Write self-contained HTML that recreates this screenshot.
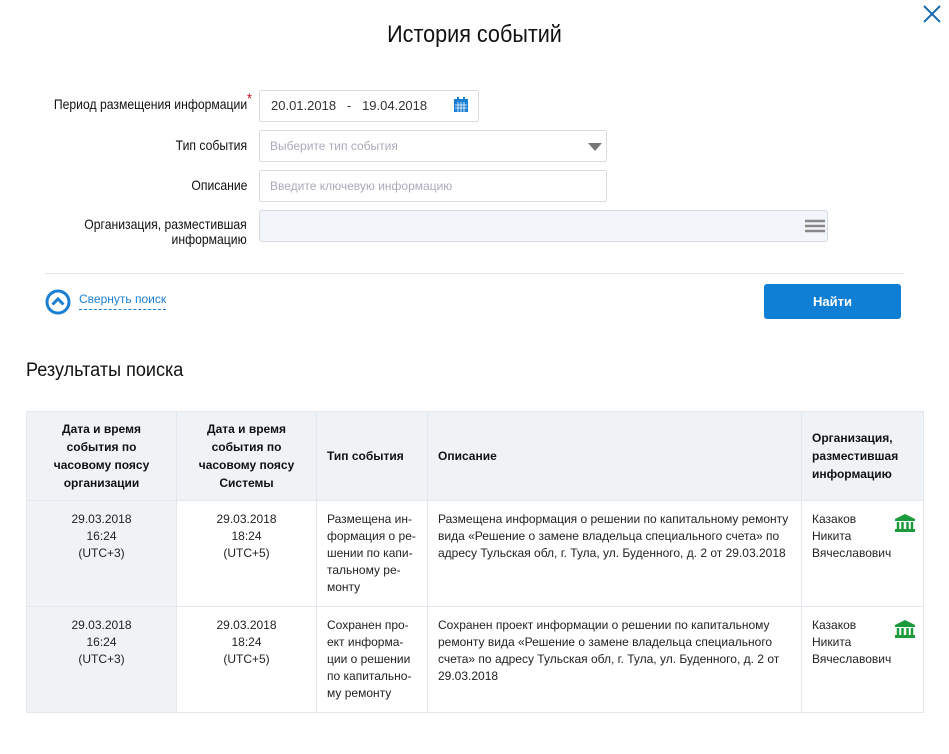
<!DOCTYPE html>
<html><head><meta charset="utf-8"><style>
*{margin:0;padding:0;box-sizing:border-box}
body{width:949px;height:754px;background:#fff;font-family:"Liberation Sans",sans-serif;color:#222;position:relative;overflow:hidden}
.a{position:absolute}
.lbl{position:absolute;right:702px;font-size:14px;text-align:right;color:#111;line-height:15px;transform:scaleX(.87);transform-origin:right center;white-space:nowrap}
.inp{position:absolute;left:259px;border:1px solid #d6dbe0;border-radius:3px;background:#fff;font-size:12px;color:#aab;padding-left:10px;line-height:30px;height:32px}
table{position:absolute;left:26px;top:411px;width:898px;border-collapse:collapse;font-size:12px;line-height:17px}
td,th{border:1px solid #e3e8ee;vertical-align:top;padding:10px 10px}
th{background:#f0f3f6;font-weight:bold;vertical-align:middle;text-align:left;color:#111;padding:8px 10px;line-height:18px}
th.c{text-align:center}
td.c{text-align:center}
td.g{background:#f0f3f6}
</style></head><body>
<div class="a" style="left:0;width:949px;top:21px;text-align:center;font-size:24px;color:#111;transform:scaleX(.9)">История событий</div>
<svg class="a" style="left:922px;top:4px" width="20" height="20"><path d="M2 2L18 18M18 2L2 18" stroke="#1a6bb0" stroke-width="2" fill="none"/></svg>

<div class="lbl" style="top:97px">Период размещения информации<span style="color:#d0021b;position:absolute;top:-6px">*</span></div>
<div class="inp" style="top:90px;width:220px;color:#333;font-size:13px;padding-left:11px">20.01.2018 &nbsp;&nbsp;- &nbsp;&nbsp;19.04.2018</div>
<svg class="a" style="left:453px;top:97px" width="16" height="16"><rect x="1" y="2" width="14" height="13" fill="#1a7fd4"/><rect x="4" y="0" width="2" height="4" fill="#1a7fd4"/><rect x="10" y="0" width="2" height="4" fill="#1a7fd4"/><path d="M2 8H14M2 11H14M5 5V15M8 5V15M11 5V15" stroke="#fff" stroke-width="0.8"/></svg>

<div class="lbl" style="top:138px">Тип события</div>
<div class="inp" style="top:130px;width:348px">Выберите тип события</div>
<svg class="a" style="left:588px;top:143px" width="14" height="9"><path d="M0 0H14L7 8Z" fill="#777"/></svg>

<div class="lbl" style="top:178px">Описание</div>
<div class="inp" style="top:170px;width:348px">Введите ключевую информацию</div>

<div class="lbl" style="top:217px">Организация, разместившая<br>информацию</div>
<div class="inp" style="top:210px;width:569px;background:#f2f5f9"></div>
<svg class="a" style="left:805px;top:219px" width="20" height="14"><path d="M0 2H20M0 7H20M0 12H20" stroke="#888" stroke-width="2.5"/></svg>

<div class="a" style="left:45px;top:273px;width:859px;height:1px;background:#e3e6ea"></div>
<svg class="a" style="left:45px;top:289px" width="26" height="26"><circle cx="13" cy="13" r="11" stroke="#1a7fd4" stroke-width="3" fill="none"/><path d="M7.5 15.5L13 10L18.5 15.5" stroke="#1a7fd4" stroke-width="3" fill="none"/></svg>
<div class="a" style="left:79px;top:292px;font-size:12px;color:#1a7fd4;border-bottom:1px dashed #1a7fd4;line-height:15px;padding-bottom:2px">Свернуть поиск</div>
<div class="a" style="left:764px;top:284px;width:137px;height:35px;background:#0f7fd6;border-radius:3px;color:#fff;font-weight:bold;font-size:13px;text-align:center;line-height:35px">Найти</div>

<div class="a" style="left:26px;top:360px;font-size:19px;color:#111;transform:scaleX(.95);transform-origin:left center">Результаты поиска</div>

<table>
<tr style="height:89px"><th class="c" style="width:150px">Дата и время события по часовому поясу организации</th><th class="c" style="width:140px">Дата и время события по часовому поясу Системы</th><th style="width:111px">Тип события</th><th style="width:374px">Описание</th><th>Организация, разместившая информацию</th></tr>
<tr style="height:106px"><td class="c g">29.03.2018<br>16:24<br>(UTC+3)</td><td class="c">29.03.2018<br>18:24<br>(UTC+5)</td><td>Размещена ин-формация о ре-шении по капи-тальному ре-монту</td><td>Размещена информация о решении по капитальному ремонту вида «Решение о замене владельца специального счета» по адресу Тульская обл, г. Тула, ул. Буденного, д. 2 от 29.03.2018</td><td style="position:relative">Казаков<br>Никита<br>Вячеславович<svg style="position:absolute;left:93px;top:13px" width="20" height="18"><path d="M10 0L20 5H0Z" fill="#1a9a3a"/><rect x="0" y="5" width="20" height="2" fill="#1a9a3a"/><path d="M3 8V15M7.5 8V15M12.5 8V15M17 8V15" stroke="#1a9a3a" stroke-width="2.5"/><rect x="0" y="15" width="20" height="3" fill="#1a9a3a"/></svg></td></tr>
<tr style="height:106px"><td class="c g">29.03.2018<br>16:24<br>(UTC+3)</td><td class="c">29.03.2018<br>18:24<br>(UTC+5)</td><td>Сохранен про-ект информа-ции о решении по капитально-му ремонту</td><td>Сохранен проект информации о решении по капитальному ремонту вида «Решение о замене владельца специального счета» по адресу Тульская обл, г. Тула, ул. Буденного, д. 2 от 29.03.2018</td><td style="position:relative">Казаков<br>Никита<br>Вячеславович<svg style="position:absolute;left:93px;top:13px" width="20" height="18"><path d="M10 0L20 5H0Z" fill="#1a9a3a"/><rect x="0" y="5" width="20" height="2" fill="#1a9a3a"/><path d="M3 8V15M7.5 8V15M12.5 8V15M17 8V15" stroke="#1a9a3a" stroke-width="2.5"/><rect x="0" y="15" width="20" height="3" fill="#1a9a3a"/></svg></td></tr>
</table>
</body></html>
